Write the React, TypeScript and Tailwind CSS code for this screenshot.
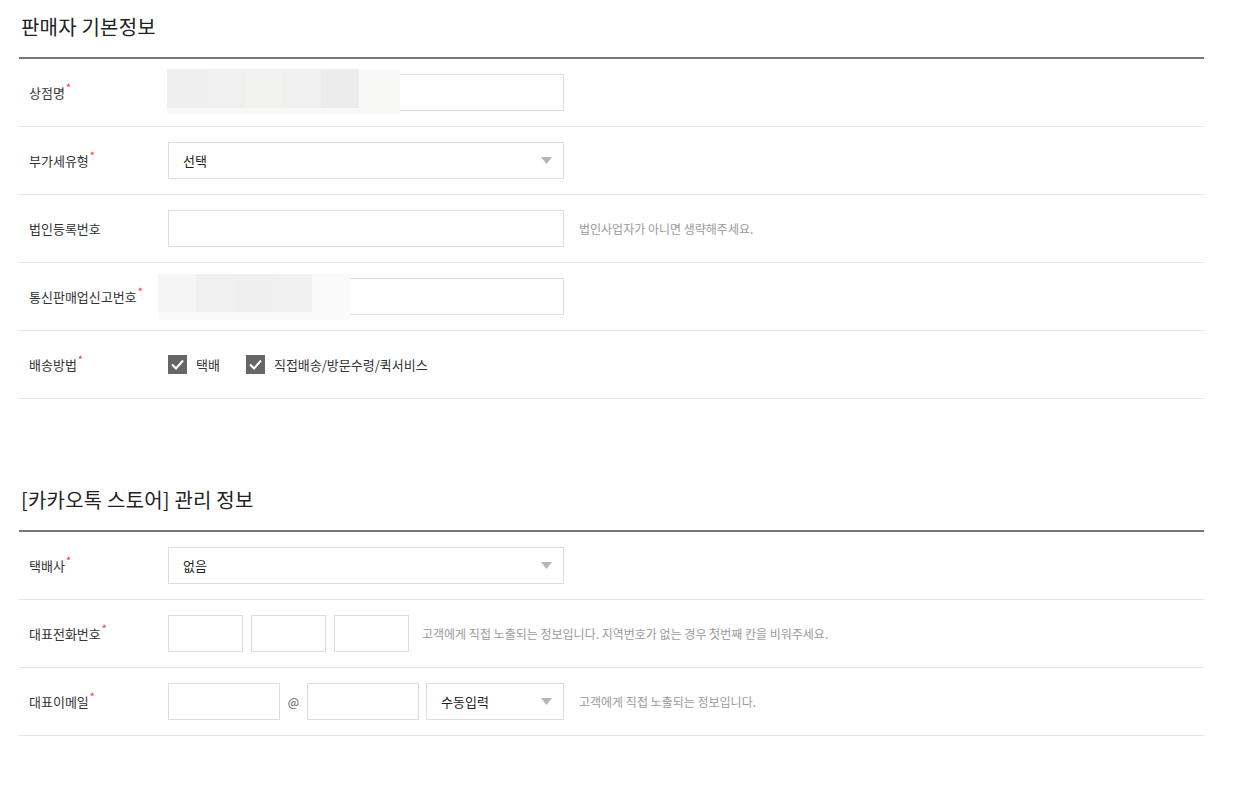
import type { ReactNode } from 'react';

const font = { fontFamily: '"Noto Sans CJK KR", "Noto Sans", sans-serif' };

function Label({ text, required }: { text: string; required?: boolean }) {
  return (
    <div className="flex w-[139px] shrink-0 items-start text-[13px] text-[#333]">
      <span>{text}</span>
      {required && <span className="ml-[1px] mt-[-4px] text-[11px] text-[#f33]">*</span>}
    </div>
  );
}

function Row({ label, required, children }: { label: string; required?: boolean; children?: ReactNode }) {
  return (
    <div className="relative flex h-[68px] items-center border-b border-[#e6e6e6] pl-[10px]">
      <Label text={label} required={required} />
      {children}
    </div>
  );
}

function Box({ w }: { w: string }) {
  return <div className={`h-[37px] shrink-0 border border-[#dedede] bg-white ${w}`} />;
}

function Select({ value, w }: { value: string; w: string }) {
  return (
    <div className={`flex h-[37px] shrink-0 items-center justify-between border border-[#dedede] bg-white pl-[14px] pr-[11px] text-[13px] text-[#222] ${w}`}>
      <span>{value}</span>
      <svg width="11" height="7" viewBox="0 0 11 7">
        <path d="M0 0 L11 0 L5.5 7 Z" fill="#b5b5b5" />
      </svg>
    </div>
  );
}

function Help({ children, ml }: { children: ReactNode; ml: string }) {
  return <span className={`text-[12px] text-[#9a9a9a] ${ml}`}>{children}</span>;
}

function Check({ label }: { label: string }) {
  return (
    <div className="flex items-center gap-[9px]">
      <div className="flex h-[19px] w-[19px] items-center justify-center bg-[#666]">
        <svg width="19" height="19" viewBox="0 0 19 19">
          <polyline points="4,9.5 8,13.5 15,5.5" fill="none" stroke="#fff" strokeWidth="2" />
        </svg>
      </div>
      <span className="text-[13px] text-[#333]">{label}</span>
    </div>
  );
}

function Heading({ children }: { children: ReactNode }) {
  return (
    <div className="flex h-[59px] items-center border-b-2 border-[#777] pb-[4px] pl-[2px] text-[20px] tracking-[0.2px] text-[#222]">
      {children}
    </div>
  );
}

export default function App() {
  return (
    <div className="min-h-[799px] w-full bg-white" style={font}>
      <div className="ml-[19px] w-[1185px]">
        <Heading>판매자 기본정보</Heading>

        <Row label="상점명" required>
          <Box w="w-[396px]" />
          {/* blurred value */}
          <div className="absolute left-[148px] top-[10px] h-[45px] w-[233px] bg-[#f8f8f7]">
            <div className="flex h-[39px] w-[192px]">
              <div className="w-[35px] bg-[#efefef]" />
              <div className="w-[43px] bg-[#f0f0f0]" />
              <div className="w-[37px] bg-[#f2f2f1]" />
              <div className="w-[39px] bg-[#f0f0f0]" />
              <div className="w-[38px] bg-[#ececec]" />
            </div>
          </div>
        </Row>

        <Row label="부가세유형" required>
          <Select value="선택" w="w-[396px]" />
        </Row>

        <Row label="법인등록번호">
          <Box w="w-[396px]" />
          <Help ml="ml-[15px]">법인사업자가 아니면 생략해주세요.</Help>
        </Row>

        <Row label="통신판매업신고번호" required>
          <Box w="w-[396px]" />
          <div className="absolute left-[139px] top-[11px] h-[46px] w-[192px] bg-[#fafafa]">
            <div className="flex h-[38px] w-[154px]">
              <div className="w-[38px] bg-[#f5f5f5]" />
              <div className="w-[39px] bg-[#f0f0f0]" />
              <div className="w-[38px] bg-[#efefef]" />
              <div className="w-[39px] bg-[#f1f1f1]" />
            </div>
          </div>
        </Row>

        <Row label="배송방법" required>
          <div className="flex items-center gap-[26px]">
            <Check label="택배" />
            <Check label="직접배송/방문수령/퀵서비스" />
          </div>
        </Row>

        <div className="mt-[74px]">
          <Heading>[카카오톡 스토어] 관리 정보</Heading>
        </div>

        <Row label="택배사" required>
          <Select value="없음" w="w-[396px]" />
        </Row>

        <Row label="대표전화번호" required>
          <div className="flex gap-[8px]">
            <Box w="w-[75px]" />
            <Box w="w-[75px]" />
            <Box w="w-[75px]" />
          </div>
          <Help ml="ml-[13px]">고객에게 직접 노출되는 정보입니다. 지역번호가 없는 경우 첫번째 칸을 비워주세요.</Help>
        </Row>

        <Row label="대표이메일" required>
          <div className="flex items-center">
            <Box w="w-[112px]" />
            <span className="w-[27px] text-center text-[12px] text-[#555]">@</span>
            <Box w="w-[112px]" />
            <div className="ml-[7px]">
              <Select value="수동입력" w="w-[138px]" />
            </div>
          </div>
          <Help ml="ml-[15px]">고객에게 직접 노출되는 정보입니다.</Help>
        </Row>
      </div>
    </div>
  );
}
